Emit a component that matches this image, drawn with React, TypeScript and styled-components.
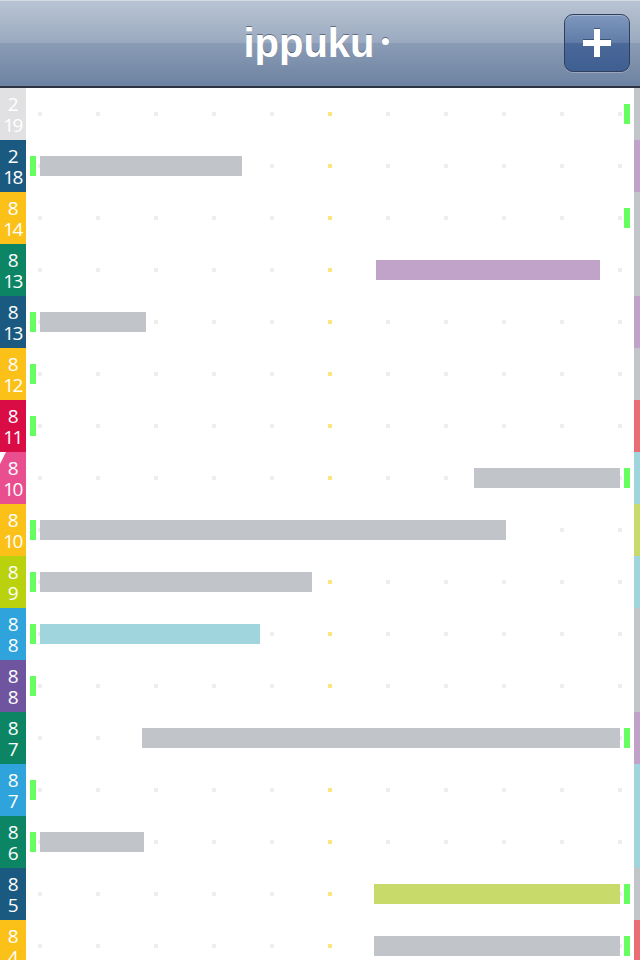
import { createGlobalStyle } from "styled-components";
import styled from "styled-components";

type Tint = "gray" | "purple" | "red" | "sky" | "lime";

interface DayRow {
  month: number;
  day: number;
  label: string;
  strip: Tint;
  bar?: { from: number; to: number; tint: Tint };
  start?: boolean;
  end?: boolean;
  corner?: boolean;
}

const tints: Record<Tint, string> = {
  gray: "#c1c5c9",
  purple: "#c1a3c9",
  red: "#e96d72",
  sky: "#a0d5dd",
  lime: "#c7da6a",
};

const rows: DayRow[] = [
  { month: 2, day: 19, label: "#e1e1e3", strip: "gray", end: true },
  { month: 2, day: 18, label: "#1b5a80", strip: "purple", start: true, bar: { from: 40, to: 242, tint: "gray" } },
  { month: 8, day: 14, label: "#fbc119", strip: "gray", end: true },
  { month: 8, day: 13, label: "#0b8563", strip: "gray", bar: { from: 376, to: 600, tint: "purple" } },
  { month: 8, day: 13, label: "#1b5a80", strip: "purple", start: true, bar: { from: 40, to: 146, tint: "gray" } },
  { month: 8, day: 12, label: "#fbc119", strip: "gray", start: true },
  { month: 8, day: 11, label: "#d90c45", strip: "red", start: true },
  { month: 8, day: 10, label: "#e94f8f", strip: "sky", end: true, corner: true, bar: { from: 474, to: 620, tint: "gray" } },
  { month: 8, day: 10, label: "#fbc119", strip: "lime", start: true, bar: { from: 40, to: 506, tint: "gray" } },
  { month: 8, day: 9, label: "#bad20d", strip: "sky", start: true, bar: { from: 40, to: 312, tint: "gray" } },
  { month: 8, day: 8, label: "#2ea3dc", strip: "gray", start: true, bar: { from: 40, to: 260, tint: "sky" } },
  { month: 8, day: 8, label: "#6f55a0", strip: "gray", start: true },
  { month: 8, day: 7, label: "#0b8563", strip: "purple", end: true, bar: { from: 142, to: 620, tint: "gray" } },
  { month: 8, day: 7, label: "#2ea3dc", strip: "sky", start: true },
  { month: 8, day: 6, label: "#0b8563", strip: "sky", start: true, bar: { from: 40, to: 144, tint: "gray" } },
  { month: 8, day: 5, label: "#1b5a80", strip: "gray", end: true, bar: { from: 374, to: 620, tint: "lime" } },
  { month: 8, day: 4, label: "#fbc119", strip: "red", end: true, bar: { from: 374, to: 620, tint: "gray" } },
];

// page x of the track's left edge
const TRACK_X = 26;
const ticks = Array.from({ length: 11 }, (_, i) => i);

const GlobalStyle = createGlobalStyle`
  html, body {
    margin: 0;
    padding: 0;
    background: #ffffff;
    overflow: hidden;
  }
  body {
    font-family: "Liberation Sans", Arial, sans-serif;
  }
`;

const Screen = styled.div`
  width: 640px;
  height: 960px;
  overflow: hidden;
  background: #ffffff;
`;

const NavBar = styled.header`
  position: relative;
  display: flex;
  align-items: center;
  justify-content: center;
  box-sizing: border-box;
  height: 88px;
  border-top: 1px solid #d3dae4;
  border-bottom: 2px solid #2c3441;
  background: linear-gradient(
    to bottom,
    #b9c4d3 0%,
    #9aa9bf 50%,
    #8a9bb5 50%,
    #6d83a2 100%
  );
`;

const Title = styled.h1`
  margin: 0 0 0 -8px;
  display: flex;
  align-items: center;
  font-family: "Liberation Sans", Arial, sans-serif;
  font-weight: 700;
  font-size: 40px;
  color: #ffffff;
  text-shadow: 0 -1px 0 rgba(40, 50, 70, 0.55);
`;

const TitleDot = styled.span`
  display: block;
  width: 7px;
  height: 7px;
  border-radius: 50%;
  margin-left: 7px;
  margin-top: -4px;
  background: #ffffff;
  box-shadow: 0 -1px 0 rgba(40, 50, 70, 0.55);
`;

const AddButton = styled.button`
  position: absolute;
  right: 10px;
  top: 13px;
  width: 66px;
  height: 58px;
  border-radius: 9px;
  border: 1px solid #2f405c;
  padding: 0;
  display: flex;
  align-items: center;
  justify-content: center;
  background: linear-gradient(
    to bottom,
    #7f97bc 0%,
    #5f7ca8 50%,
    #4a6899 50%,
    #3f5e91 100%
  );
  box-shadow: inset 0 1px 0 rgba(255, 255, 255, 0.3), 0 1px 0 rgba(255, 255, 255, 0.25);
`;

const List = styled.div`
  display: flex;
  flex-direction: column;
`;

const Row = styled.div`
  display: grid;
  grid-template-columns: 26px 1fr 6px;
  height: 52px;
`;

const DateCell = styled.div<{ $bg: string }>`
  position: relative;
  display: flex;
  flex-direction: column;
  align-items: center;
  justify-content: center;
  background: ${(p) => p.$bg};
  color: #ffffff;
  font-family: "Open Sans", "DejaVu Sans", sans-serif;
  font-size: 19px;
  line-height: 21px;
  letter-spacing: -1.5px;
  padding-top: 1px;
  padding-right: 1px;
`;

const Corner = styled.span`
  position: absolute;
  left: 0;
  top: 0;
  width: 0;
  height: 0;
  border-top: 12px solid #ffffff;
  border-right: 6px solid transparent;
`;

const Track = styled.div`
  position: relative;
  display: flex;
  align-items: center;
  gap: 54px;
  padding-left: 12px;
`;

const Tick = styled.span<{ $noon?: boolean }>`
  width: 4px;
  height: 4px;
  background: ${(p) => (p.$noon ? "#fde57c" : "#eeeeee")};
`;

const Bar = styled.span<{ $tint: Tint }>`
  position: absolute;
  top: 16px;
  height: 20px;
  background: ${(p) => tints[p.$tint]};
`;

const Marker = styled.span<{ $side: "start" | "end" }>`
  position: absolute;
  top: 16px;
  width: 6px;
  height: 20px;
  background: #66ff5f;
  ${(p) => (p.$side === "start" ? "left: 4px;" : "right: 4px;")}
`;

const Strip = styled.div<{ $tint: Tint }>`
  background: ${(p) => tints[p.$tint]};
`;

const PlusIcon = () => (
  <svg width="30" height="30" viewBox="0 0 30 30">
    <path d="M12 1h6v11h11v6H18v11h-6V18H1v-6h11z" fill="#24344f" opacity="0.6" transform="translate(0 -1)" />
    <path d="M12 1h6v11h11v6H18v11h-6V18H1v-6h11z" fill="#ffffff" />
  </svg>
);

const App = () => {
  return (
    <Screen>
      <GlobalStyle />
      <NavBar>
        <Title>
          ippuku<TitleDot />
        </Title>
        <AddButton aria-label="add">
          <PlusIcon />
        </AddButton>
      </NavBar>
      <List>
        {rows.map((row, i) => (
          <Row key={i}>
            <DateCell $bg={row.label}>
              {row.corner && <Corner />}
              <span>{row.month}</span>
              <span>{row.day}</span>
            </DateCell>
            <Track>
              {ticks.map((t) => (
                <Tick key={t} $noon={t === 5} />
              ))}
              {row.bar && (
                <Bar
                  $tint={row.bar.tint}
                  style={{ left: row.bar.from - TRACK_X, width: row.bar.to - row.bar.from }}
                />
              )}
              {row.start && <Marker $side="start" />}
              {row.end && <Marker $side="end" />}
            </Track>
            <Strip $tint={row.strip} />
          </Row>
        ))}
      </List>
    </Screen>
  );
};

export default App;
